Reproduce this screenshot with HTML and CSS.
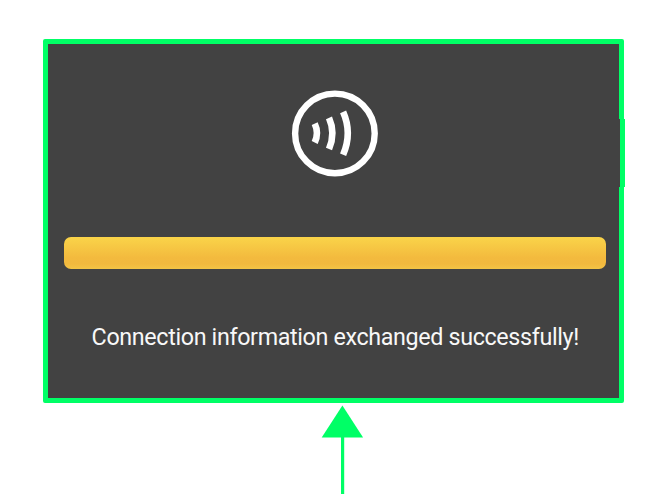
FILE: index.html
```html
<!DOCTYPE html>
<html lang="en">
<head>
<meta charset="utf-8">
<title>Connection</title>
<link rel="stylesheet" href="styles.css">
</head>
<body>
<main class="screen">
  <section class="panel">
    <svg class="icon" viewBox="0 0 88 88" fill="none" stroke="#fff">
      <circle cx="43.9" cy="44.4" r="39.8" stroke-width="6.4"/>
      <path d="M23.7 34.6Q28.2 44 23.7 53.5" stroke-width="6.6"/>
      <path d="M38 28.8Q44.8 44 38 60" stroke-width="6.6"/>
      <path d="M52.1 22.8Q61.5 44 52.1 65.7" stroke-width="6.6"/>
    </svg>
    <div class="progress"></div>
    <p class="message"><svg class="message-text" viewBox="0 0 488 36"><text x="0.6" y="24" textLength="487.6">Connection information exchanged successfully!</text></svg></p>
    <span class="edge"></span>
  </section>
  <svg class="arrow" viewBox="0 0 44 90" fill="#00ff66">
    <path d="M22.4 1.6L43.1 33.5H1.7Z"/>
    <path d="M21 32h3.2v58h-3.2z"/>
  </svg>
</main>
</body>
</html>
```
FILE: styles.css
```css
body {
  margin: 0;
  background: #fff;
  overflow: hidden;
}
.screen {
  width: 668px;
  height: 494px;
  box-sizing: border-box;
  padding: 39px 44px 0 43px;
}
.panel {
  position: relative;
  box-sizing: border-box;
  width: 581px;
  height: 364px;
  border: 5px solid #00ff66;
  border-radius: 2px;
  background: #424242;
  display: flex;
  flex-direction: column;
  align-items: center;
  padding-top: 45px;
}
.icon {
  width: 88px;
  height: 88px;
  margin-left: 3px;
}
.progress {
  width: 542px;
  height: 32px;
  margin: 60px 0 0 3px;
  border-radius: 7px;
  background: linear-gradient(#fad449, #f3ba3e 65%, #f2b93e 84%, #f4c445);
}
.message {
  margin: 52px 0 0 3px;
  height: 36px;
}
.message-text {
  display: block;
  width: 488px;
  height: 36px;
  overflow: visible;
  font: 23.3px Roboto, sans-serif;
  fill: #f8f8f8;
}
.edge {
  position: absolute;
  top: 75px;
  right: -6px;
  width: 5px;
  height: 68px;
  border-left: 1px solid #424242;
  background: #00ff66;
}
.arrow {
  display: block;
  width: 44px;
  height: 90px;
  margin: 1px 0 0 277px;
}
```
